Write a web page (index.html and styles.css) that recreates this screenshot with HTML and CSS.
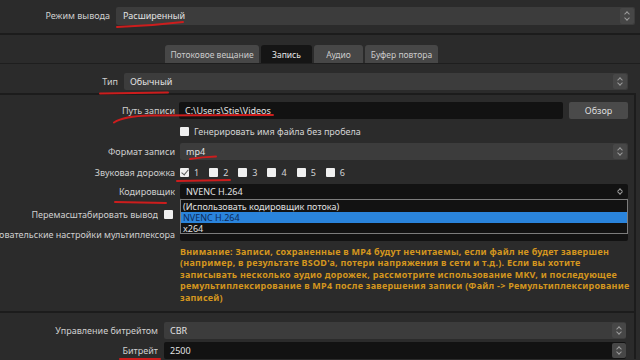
FILE: index.html
```html
<!DOCTYPE html>
<html lang="ru">

<head>
    <meta charset="UTF-8">
    <meta name="viewport" content="width=device-width, initial-scale=1.0">
    <title>Настройки вывода</title>
    <link rel="stylesheet" href="styles.css">
</head>

<body>
    <div class="mode-row">
        <span class="label">Режим вывода</span>
        <div class="combo">Расширенный<span class="spin"></span></div>
    </div>
    <div class="divider"></div>

    <div class="tabs">
        <div class="tab">Потоковое вещание</div>
        <div class="tab active">Запись</div>
        <div class="tab">Аудио</div>
        <div class="tab">Буфер повтора</div>
    </div>

    <div class="pane">
        <div class="type-row">
            <span class="label">Тип</span>
            <div class="combo">Обычный<span class="spin"></span></div>
        </div>

        <div class="group">
            <div class="row tall">
                <span class="label">Путь записи</span>
                <div class="field dark path">C:\Users\Stie\Videos</div>
                <button class="browse">Обзор</button>
            </div>
            <div class="row short">
                <span class="label"></span>
                <label class="check"><span class="box"></span>Генерировать имя файла без пробела</label>
            </div>
            <div class="row tall">
                <span class="label">Формат записи</span>
                <div class="combo">mp4<span class="spin"></span></div>
            </div>
            <div class="row short">
                <span class="label">Звуковая дорожка</span>
                <div class="tracks">
                    <label class="check"><span class="box on"></span>1</label>
                    <label class="check"><span class="box"></span>2</label>
                    <label class="check"><span class="box"></span>3</label>
                    <label class="check"><span class="box"></span>4</label>
                    <label class="check"><span class="box"></span>5</label>
                    <label class="check"><span class="box"></span>6</label>
                </div>
            </div>
            <div class="row enc">
                <span class="label">Кодировщик</span>
                <div class="combo dark">NVENC H.264<span class="spin bare"></span>
                    <ul class="popup">
                        <li>(Использовать кодировщик потока)</li>
                        <li class="sel">NVENC H.264</li>
                        <li>x264</li>
                    </ul>
                </div>
            </div>
            <div class="row short rescale">
                <span class="label">Перемасштабировать вывод</span>
                <label class="check"><span class="box"></span></label>
            </div>
            <div class="row mux">
                <span class="label">Пользовательские настройки мультиплексора</span>
                <div class="field dark"></div>
            </div>
            <p class="warning">Внимание: Записи, сохраненные в MP4 будут нечитаемы, если файл не будет завершен<br>
                (например, в результате BSOD'a, потери напряжения в сети и т.д.). Если вы хотите<br>
                записывать несколько аудио дорожек, рассмотрите использование MKV, и последующее<br>
                ремультиплексирование в MP4 после завершения записи (Файл -&gt; Ремультиплексирование<br>
                записей)</p>
        </div>

        <div class="group rate">
            <div class="row tall">
                <span class="label">Управление битрейтом</span>
                <div class="combo">CBR<span class="spin"></span></div>
            </div>
            <div class="row tall">
                <span class="label">Битрейт</span>
                <div class="combo dark">2500<span class="spin"></span></div>
            </div>
        </div>
    </div>

    <!-- red hand-drawn underlines on top of the screenshot -->
    <svg class="marks" width="640" height="360" viewBox="0 0 640 360">
        <g fill="none" stroke="#cc1d1d" stroke-width="2" stroke-linecap="round">
            <path d="M117 27 Q150 26 183 22" />
            <path d="M100 93.5 L168 92.5" />
            <path d="M114 122.5 Q124 116 150 115.5 L273 115" />
            <path d="M190 159 Q202 157 216 156.5" />
            <path d="M177 181 L230 180" />
            <path d="M115 202 L166 203" />
            <path d="M120 359 L160 359" />
        </g>
    </svg>
</body>

</html>
```

FILE: styles.css
```css
* {
    box-sizing: border-box;
}

body {
    margin: 0;
    width: 640px;
    height: 360px;
    overflow: hidden;
    position: relative;
    background-color: #2b2b2b;
    color: #d2d2d2;
    font-family: "Noto Sans", "Open Sans", sans-serif;
    font-size: 9px;
}

.label {
    display: flex;
    justify-content: flex-end;
    flex: none;
    white-space: nowrap;
    overflow: hidden;
    color: #cfcfcf;
}

/* combo boxes and inputs */
.combo,
.field {
    position: relative;
    flex: 1;
    height: 17px;
    display: flex;
    align-items: center;
    padding-left: 6px;
    background-color: #3c3c3c;
    border-radius: 2px;
    color: #e2e2e2;
}

.dark {
    background-color: #121212;
}

.spin {
    position: absolute;
    right: 1px;
    top: 1px;
    bottom: 1px;
    width: 14px;
    border-radius: 2px;
    background-color: #474747;
}

.spin.bare {
    background-color: transparent;
}

.spin::before,
.spin::after {
    content: "";
    position: absolute;
    left: 5px;
    width: 3px;
    height: 3px;
    border-left: 1px solid #9c9c9c;
    border-top: 1px solid #9c9c9c;
}

.spin::before {
    top: 4px;
    transform: rotate(45deg);
}

.spin::after {
    bottom: 4px;
    transform: rotate(-135deg);
}

/* output mode */
.mode-row {
    display: flex;
    align-items: center;
    gap: 6px;
    height: 33px;
    padding: 7px 5px 9px 0;
}

.mode-row .label {
    width: 110px;
}

.mode-row .combo {
    height: 18px;
    padding-left: 7px;
}

.divider {
    height: 2px;
    background-color: #1c1c1c;
}

/* tabs */
.tabs {
    display: flex;
    gap: 2px;
    padding: 10px 0 0 165px;
}

.tab {
    height: 18px;
    padding: 0;
    display: flex;
    align-items: center;
    justify-content: center;
    white-space: nowrap;
    background-color: #474747;
    border-radius: 3px 3px 0 0;
    color: #cacaca;
    font-size: 8.5px;
}

.tab:nth-child(1) {
    width: 94px;
}

.tab:nth-child(2) {
    width: 51px;
}

.tab:nth-child(3) {
    width: 49px;
}

.tab:nth-child(4) {
    width: 73px;
}

.tab.active {
    background-color: #151515;
    color: #e6e6e6;
}

.pane {
    border-top: 1px solid #1e1e1e;
}

.type-row {
    display: flex;
    align-items: center;
    gap: 6px;
    padding: 9px 12px 3px 0;
}

.type-row .label {
    width: 118px;
}

/* group boxes */
.group {
    width: 636px;
    border-top: 2px solid #1c1c1c;
    border-right: 2px solid #1c1c1c;
    padding: 7px 6px 8px 0;
}

.row {
    display: flex;
    align-items: center;
    gap: 5px;
    margin-top: 6px;
}

.row:first-child {
    margin-top: 0;
}

.row .label {
    width: 175px;
}

.row.tall {
    height: 17px;
}

.row.short {
    height: 12px;
}

.row.enc {
    height: 15px;
}

.row.enc .combo {
    height: 15px;
    z-index: 2;
}

.row.rescale {
    margin-top: 9px;
    gap: 6px;
}

.row.rescale .label {
    width: 158px;
}

.row.mux {
    height: 14px;
    margin-top: 7px;
}

.row.mux .field {
    height: 14px;
}

.path {
    flex: none;
    width: 384px;
    margin-left: -1px;
}

.browse {
    margin-left: 1px;
    width: 59px;
    height: 17px;
    border: none;
    border-radius: 2px;
    background-color: #4a4a4a;
    color: #dedede;
    font-family: inherit;
    font-size: 9px;
    padding: 0;
}

.check {
    display: inline-flex;
    align-items: center;
    gap: 5px;
    color: #d4d4d4;
}

.box {
    width: 9px;
    height: 9px;
    background-color: #f0f0f0;
    border-radius: 1px;
    position: relative;
}

.box.on::after {
    content: "";
    position: absolute;
    left: 3px;
    top: 0px;
    width: 3px;
    height: 6px;
    border-right: 1.5px solid #5a5a5a;
    border-bottom: 1.5px solid #5a5a5a;
    transform: rotate(40deg);
}

.tracks {
    display: flex;
    gap: 10px;
}

/* encoder dropdown list */
.popup {
    position: absolute;
    left: 0;
    right: 0;
    top: 15px;
    margin: 0;
    padding: 1px 0;
    list-style: none;
    background-color: #121212;
    border: 1px solid #7c7c7c;
    height: 35px;
}

.popup li {
    height: 11px;
    line-height: 11px;
    padding-left: 2px;
    color: #e0e0e0;
}

.popup li.sel {
    background-color: #2a84dc;
    color: #0d2a5a;
}

.warning {
    margin: 5px 0 0 180px;
    white-space: nowrap;
    line-height: 11.4px;
    font-weight: bold;
    letter-spacing: 0.25px;
    color: #d4961e;
}

.group.rate {
    padding: 9px 8px 0 0;
}

.group.rate .row {
    gap: 6px;
    margin-top: 3px;
}

.group.rate .row:first-child {
    margin-top: 0;
}

.group.rate .label {
    width: 158px;
}

.group.rate .spin {
    right: 0;
}

.marks {
    position: absolute;
    left: 0;
    top: 0;
    pointer-events: none;
}
```
